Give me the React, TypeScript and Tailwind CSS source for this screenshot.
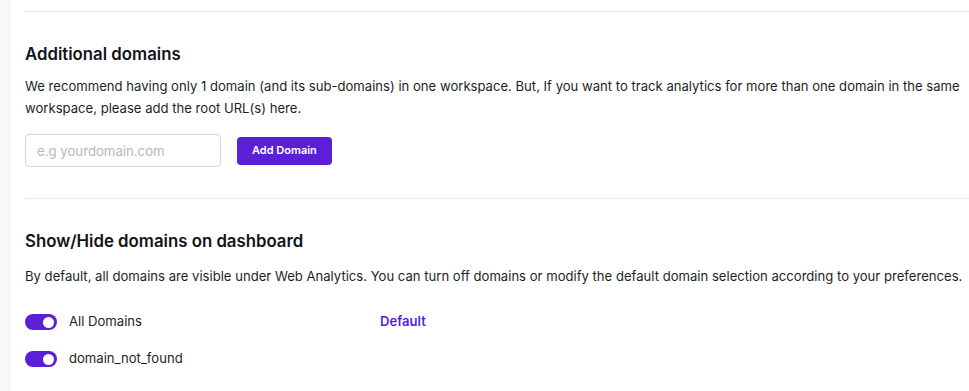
function Toggle({ on }: { on: boolean }) {
  return (
    <span
      className={`inline-flex h-4 w-8 shrink-0 items-center rounded-full px-[3px] ${
        on ? "justify-end bg-[#5b1fd6]" : "justify-start bg-gray-300"
      }`}
    >
      <span className="h-[11px] w-[11px] rounded-full bg-white" />
    </span>
  );
}

const domains = [
  { name: "All Domains", isDefault: true },
  { name: "domain_not_found", isDefault: false },
];

export default function App() {
  return (
    <div
      className="flex h-[391px] w-[969px] overflow-hidden bg-white text-[#1c1f24]"
      style={{ fontFamily: "Inter, 'Noto Sans', sans-serif" }}
    >
      <div className="w-[10px] shrink-0 border-r border-[#eef0f3] bg-[#f8f9fb]" />
      <div className="flex-1 pl-[15px] pt-[11px]">
        <section className="border-t border-[#e8eaee] pb-[31px] pt-[30px]">
          <h2 className="text-[16.8px] font-semibold leading-6 text-[#111318]">Additional domains</h2>
          <p className="mt-[9px] text-[13.1px] leading-[22px]">
            We recommend having only 1 domain (and its sub-domains) in one workspace. But, If you want to track
            analytics for more than one domain in the same workspace, please add the root URL(s) here.
          </p>
          <div className="mt-[15px] flex items-center gap-4">
            <input
              placeholder="e.g yourdomain.com"
              className="h-[33px] w-[196px] rounded border border-[#d3d6dc] px-[11px] text-[13.2px] outline-none placeholder:text-[#b4b8bf]"
            />
            <button className="h-[28px] rounded bg-[#5b1fd6] px-[15px] text-[11px] font-semibold text-white">
              Add Domain
            </button>
          </div>
        </section>
        <section className="border-t border-[#e8eaee] pt-[30px]">
          <h2 className="text-[16.8px] font-semibold leading-6 text-[#111318]">Show/Hide domains on dashboard</h2>
          <p className="mt-3 text-[13.1px] leading-[22px]">
            By default, all domains are visible under Web Analytics. You can turn off domains or modify the default
            domain selection according to your preferences.
          </p>
          <div className="mt-[23px] flex flex-col gap-[13px]">
            {domains.map((d) => (
              <div key={d.name} className="flex h-6 items-center">
                <Toggle on />
                <span className="ml-3 w-[311px] text-[13.1px]">{d.name}</span>
                {d.isDefault && <span className="text-[13.1px] font-semibold text-[#5b1fd6]">Default</span>}
              </div>
            ))}
          </div>
        </section>
      </div>
    </div>
  );
}
